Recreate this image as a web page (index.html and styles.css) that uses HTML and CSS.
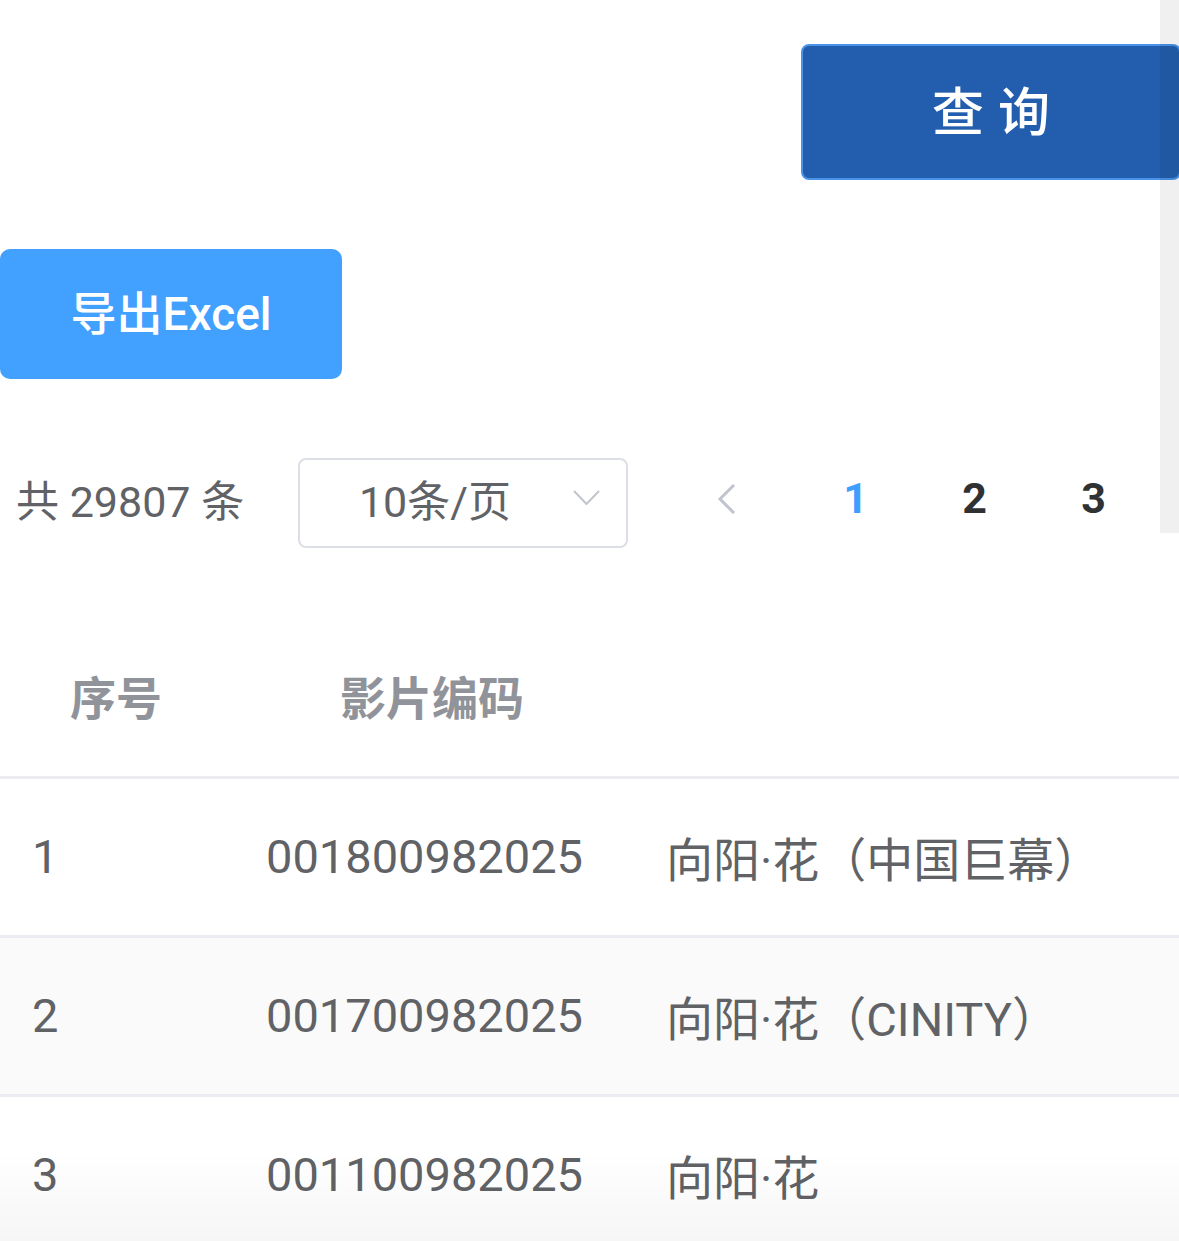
FILE: index.html
```html
<!DOCTYPE html>
<html lang="zh-CN">
<head>
<meta charset="utf-8">
<title>影片查询</title>
<link rel="stylesheet" href="styles.css">
</head>
<body>
<div class="page">
  <div class="toolbar">
    <button class="btn-query">查询</button>
  </div>
  <div class="export-bar">
    <button class="btn-export">导出Excel</button>
  </div>
  <div class="pager">
    <span class="total">共 29807 条</span>
    <div class="sizes">
      <span class="sizes-text">10条/页</span>
      <svg class="sizes-arrow" width="27" height="15" viewBox="0 0 27 15"><polyline points="1,1 13.5,14 26,1" fill="none" stroke="#c0c4cc" stroke-width="2"/></svg>
    </div>
    <span class="btn-prev"><svg width="20" height="30" viewBox="0 0 20 30"><polyline points="17,1 3,15 17,29" fill="none" stroke="#c0c4cc" stroke-width="3"/></svg></span>
    <span class="num active">1</span>
    <span class="num">2</span>
    <span class="num">3</span>
  </div>
  <div class="table">
    <div class="row head">
      <div class="cell">序号</div>
      <div class="cell">影片编码</div>
      <div class="cell"></div>
    </div>
    <div class="row">
      <div class="cell c1">1</div>
      <div class="cell">001800982025</div>
      <div class="cell">向阳·花（中国巨幕）</div>
    </div>
    <div class="row striped">
      <div class="cell c1">2</div>
      <div class="cell">001700982025</div>
      <div class="cell">向阳·花（CINITY）</div>
    </div>
    <div class="row last">
      <div class="cell c1">3</div>
      <div class="cell">001100982025</div>
      <div class="cell">向阳·花</div>
    </div>
  </div>
</div>
<div class="scrollbar"></div>
<div class="bottom-fade"></div>
</body>
</html>
```
FILE: styles.css
```css
html, body {
  margin: 0;
  padding: 0;
  background: #ffffff;
  overflow: hidden;
}
body {
  font-family: "Roboto", "Noto Sans CJK SC", sans-serif;
  width: 1179px;
  height: 1241px;
}
.page {
  width: 1179px;
}
.toolbar {
  display: flex;
  justify-content: flex-end;
  padding-top: 44px;
  margin-right: -2px;
}
.btn-query {
  box-sizing: border-box;
  width: 380px;
  height: 136px;
  border: 2px solid #4a93e8;
  border-radius: 8px;
  background: #225ead;
  color: #ffffff;
  font-family: "Roboto", "Noto Sans CJK SC", sans-serif;
  font-size: 52px;
  font-weight: 500;
  letter-spacing: 14px;
  text-indent: 14px;
  padding: 0 0 8px 0;
}
.export-bar {
  margin-top: 69px;
  display: flex;
}
.btn-export {
  width: 342px;
  height: 130px;
  border: none;
  border-radius: 10px;
  background: #42a0ff;
  color: #ffffff;
  font-family: "Roboto", "Noto Sans CJK SC", sans-serif;
  font-size: 46px;
  font-weight: 500;
  padding: 0 0 8px 0;
}
.pager {
  margin-top: 79px;
  height: 90px;
  display: flex;
  align-items: center;
}
.total {
  box-sizing: border-box;
  width: 298px;
  padding-left: 16px;
  padding-bottom: 10px;
  font-size: 43px;
  color: #606266;
}
.sizes {
  position: relative;
  box-sizing: border-box;
  width: 330px;
  height: 90px;
  border: 2px solid #dcdfe6;
  border-radius: 8px;
  display: flex;
  align-items: center;
  justify-content: center;
  padding: 0 82px 10px 26px;
  font-size: 43px;
  color: #606266;
}
.sizes-arrow {
  position: absolute;
  left: 273px;
  top: 30px;
}
.btn-prev {
  box-sizing: border-box;
  width: 60px;
  margin-left: 69px;
  margin-right: 39px;
  display: flex;
  justify-content: center;
  align-items: center;
  height: 90px;
  padding-bottom: 8px;
}
.num {
  width: 119px;
  text-align: center;
  font-size: 43px;
  font-weight: 700;
  color: #303133;
  padding-bottom: 10px;
}
.num.active {
  color: #409eff;
}
.table {
  margin-top: 72px;
}
.row {
  display: grid;
  grid-template-columns: 232px 400px 1fr;
  height: 156px;
  border-bottom: 3px solid #ebedf2;
  align-items: center;
  font-size: 47px;
  color: #606266;
}
.row.striped {
  background: #fafafa;
}
.row.last {
  border-bottom: none;
}
.row .cell {
  padding-left: 34px;
  padding-bottom: 2px;
  white-space: nowrap;
}
.row .cell.c1 {
  padding-left: 32px;
}
.row.head .cell {
  padding-left: 0;
  padding-bottom: 6px;
  text-align: center;
  font-size: 46px;
  font-weight: 700;
  color: #909399;
}
.scrollbar {
  position: fixed;
  right: 0;
  top: 0;
  width: 19px;
  height: 533px;
  background: rgba(0, 0, 0, 0.06);
}
.bottom-fade {
  position: fixed;
  left: 0;
  bottom: 0;
  width: 1179px;
  height: 90px;
  background: linear-gradient(to bottom, rgba(0, 0, 0, 0), rgba(0, 0, 0, 0.035));
  pointer-events: none;
}
```
